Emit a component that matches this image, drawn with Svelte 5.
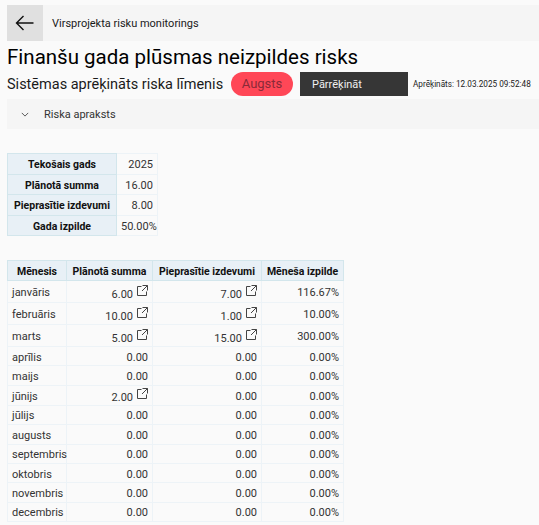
<script>
  const summary = [
    ['Tekošais gads', '2025'],
    ['Plānotā summa', '16.00'],
    ['Pieprasītie izdevumi', '8.00'],
    ['Gada izpilde', '50.00%'],
  ];

  const months = [
    { name: 'janvāris', plan: '6.00', planLink: true, req: '7.00', reqLink: true, pct: '116.67%' },
    { name: 'februāris', plan: '10.00', planLink: true, req: '1.00', reqLink: true, pct: '10.00%' },
    { name: 'marts', plan: '5.00', planLink: true, req: '15.00', reqLink: true, pct: '300.00%' },
    { name: 'aprīlis', plan: '0.00', req: '0.00', pct: '0.00%' },
    { name: 'maijs', plan: '0.00', req: '0.00', pct: '0.00%' },
    { name: 'jūnijs', plan: '2.00', planLink: true, req: '0.00', pct: '0.00%' },
    { name: 'jūlijs', plan: '0.00', req: '0.00', pct: '0.00%' },
    { name: 'augusts', plan: '0.00', req: '0.00', pct: '0.00%' },
    { name: 'septembris', plan: '0.00', req: '0.00', pct: '0.00%' },
    { name: 'oktobris', plan: '0.00', req: '0.00', pct: '0.00%' },
    { name: 'novembris', plan: '0.00', req: '0.00', pct: '0.00%' },
    { name: 'decembris', plan: '0.00', req: '0.00', pct: '0.00%' },
  ];
</script>

{#snippet link()}
  <svg class="link" viewBox="0 0 11 11" fill="none" stroke="currentColor" stroke-width="1">
    <path d="M4.5 1.5H.5v9h9V6.5" />
    <path d="M5.5 .5h5v5M10.5 .5 5 6" />
  </svg>
{/snippet}

<div class="page">
  <header class="topbar">
    <button class="back" aria-label="Atpakaļ">
      <svg viewBox="0 0 20 16" fill="none" stroke="currentColor" stroke-width="1.4">
        <path d="M18.5 8H1.5M8.5 1 1.5 8l7 7" />
      </svg>
    </button>
    <span class="crumb">Virsprojekta risku monitorings</span>
  </header>

  <h1>Finanšu gada plūsmas neizpildes risks</h1>

  <div class="level">
    <span class="level__label">Sistēmas aprēķināts riska līmenis</span>
    <span class="badge">Augsts</span>
    <button class="recalc">Pārrēķināt</button>
    <span class="stamp">Aprēķināts: 12.03.2025 09:52:48</span>
  </div>

  <div class="accordion">
    <svg viewBox="0 0 10 6" fill="none" stroke="currentColor" stroke-width="1">
      <path d="M1 1l4 4 4-4" />
    </svg>
    <span>Riska apraksts</span>
  </div>

  <table class="summary">
    <tbody>
      {#each summary as [label, value]}
        <tr>
          <th>{label}</th>
          <td>{value}</td>
        </tr>
      {/each}
    </tbody>
  </table>

  <table class="monthly">
    <thead>
      <tr>
        <th>Mēnesis</th>
        <th>Plānotā summa</th>
        <th>Pieprasītie izdevumi</th>
        <th>Mēneša izpilde</th>
      </tr>
    </thead>
    <tbody>
      {#each months as m}
        <tr>
          <td class="name">{m.name}</td>
          <td class:has-link={m.planLink}>{m.plan}{#if m.planLink}{@render link()}{/if}</td>
          <td class:has-link={m.reqLink}>{m.req}{#if m.reqLink}{@render link()}{/if}</td>
          <td>{m.pct}</td>
        </tr>
      {/each}
    </tbody>
  </table>
</div>

<style>
  :global(body) {
    background: #fafafa;
    font-family: Roboto, 'Open Sans', sans-serif;
    color: #1a1a1a;
  }

  .page {
    height: 525px;
    overflow: hidden;
    padding: 5px 0 0 7px;
    box-sizing: border-box;
  }

  .topbar {
    display: flex;
    align-items: center;
    height: 36px;
    background: #f5f5f5;
  }

  .back {
    display: flex;
    align-items: center;
    justify-content: center;
    width: 36px;
    height: 36px;
    padding: 0;
    border: 0;
    background: #e0e0e0;
    color: #111;
  }

  .back svg {
    width: 20px;
    height: 16px;
  }

  .crumb {
    margin-left: 9px;
    font-size: 11px;
  }

  h1 {
    margin: 2px 0 0;
    font-size: 20.5px;
    line-height: 28px;
    font-weight: 400;
    color: #000;
  }

  .level {
    display: flex;
    align-items: center;
    height: 26px;
  }

  .level__label {
    width: 224px;
    font-size: 14.5px;
    white-space: nowrap;
  }

  .badge {
    width: 62px;
    height: 24px;
    border-radius: 12px;
    background: #ff4757;
    color: #8a2a38;
    font-size: 13px;
    line-height: 24px;
    text-align: center;
  }

  .recalc {
    width: 108px;
    height: 24px;
    margin-left: 7px;
    padding: 0 0 0 12px;
    border: 0;
    background: #363636;
    color: #f0f0f0;
    font: inherit;
    font-size: 11px;
    text-align: left;
  }

  .stamp {
    margin-left: 5px;
    font-size: 8.2px;
    white-space: nowrap;
  }

  .accordion {
    display: flex;
    align-items: center;
    height: 30px;
    margin: 2px 0 0 0;
    padding-left: 14px;
    background: #f5f5f5;
    font-size: 11px;
    color: #333;
  }

  .accordion svg {
    width: 8px;
    height: 5px;
    margin-right: 15px;
  }

  table {
    border-collapse: collapse;
    table-layout: fixed;
    font-size: 11px;
    color: #333;
  }

  th, td {
    box-sizing: border-box;
  }

  th {
    background: #e8f0f6;
    border: 1px solid #d3e6ec;
    color: #111;
    font-weight: 700;
    font-size: 10.5px;
    text-align: center;
    padding: 2px 2px 0;
    white-space: nowrap;
  }

  td {
    border: 1px solid #edf3f7;
    text-align: right;
    padding: 2px 4px 0;
    white-space: nowrap;
  }

  .summary {
    width: 151px;
    margin-top: 24px;
  }

  .summary tr {
    height: 20.5px;
  }

  .summary th {
    width: 109px;
  }

  .monthly {
    width: 336px;
    margin-top: 24px;
  }

  .monthly th {
    height: 20px;
  }

  .monthly th:nth-child(1) { width: 59px; }
  .monthly th:nth-child(2) { width: 86px; }
  .monthly th:nth-child(3) { width: 109px; }
  .monthly th:nth-child(4) { width: 82px; }

  .monthly tbody tr {
    height: 19.4px;
  }

  .monthly tbody tr:nth-child(-n+3) {
    height: 22px;
  }

  .monthly tbody tr:nth-child(6) {
    height: 20px;
  }

  .monthly .name {
    text-align: left;
  }

  .link {
    width: 11px;
    height: 11px;
    margin-left: 4px;
    vertical-align: 2px;
    color: #444;
  }
</style>
